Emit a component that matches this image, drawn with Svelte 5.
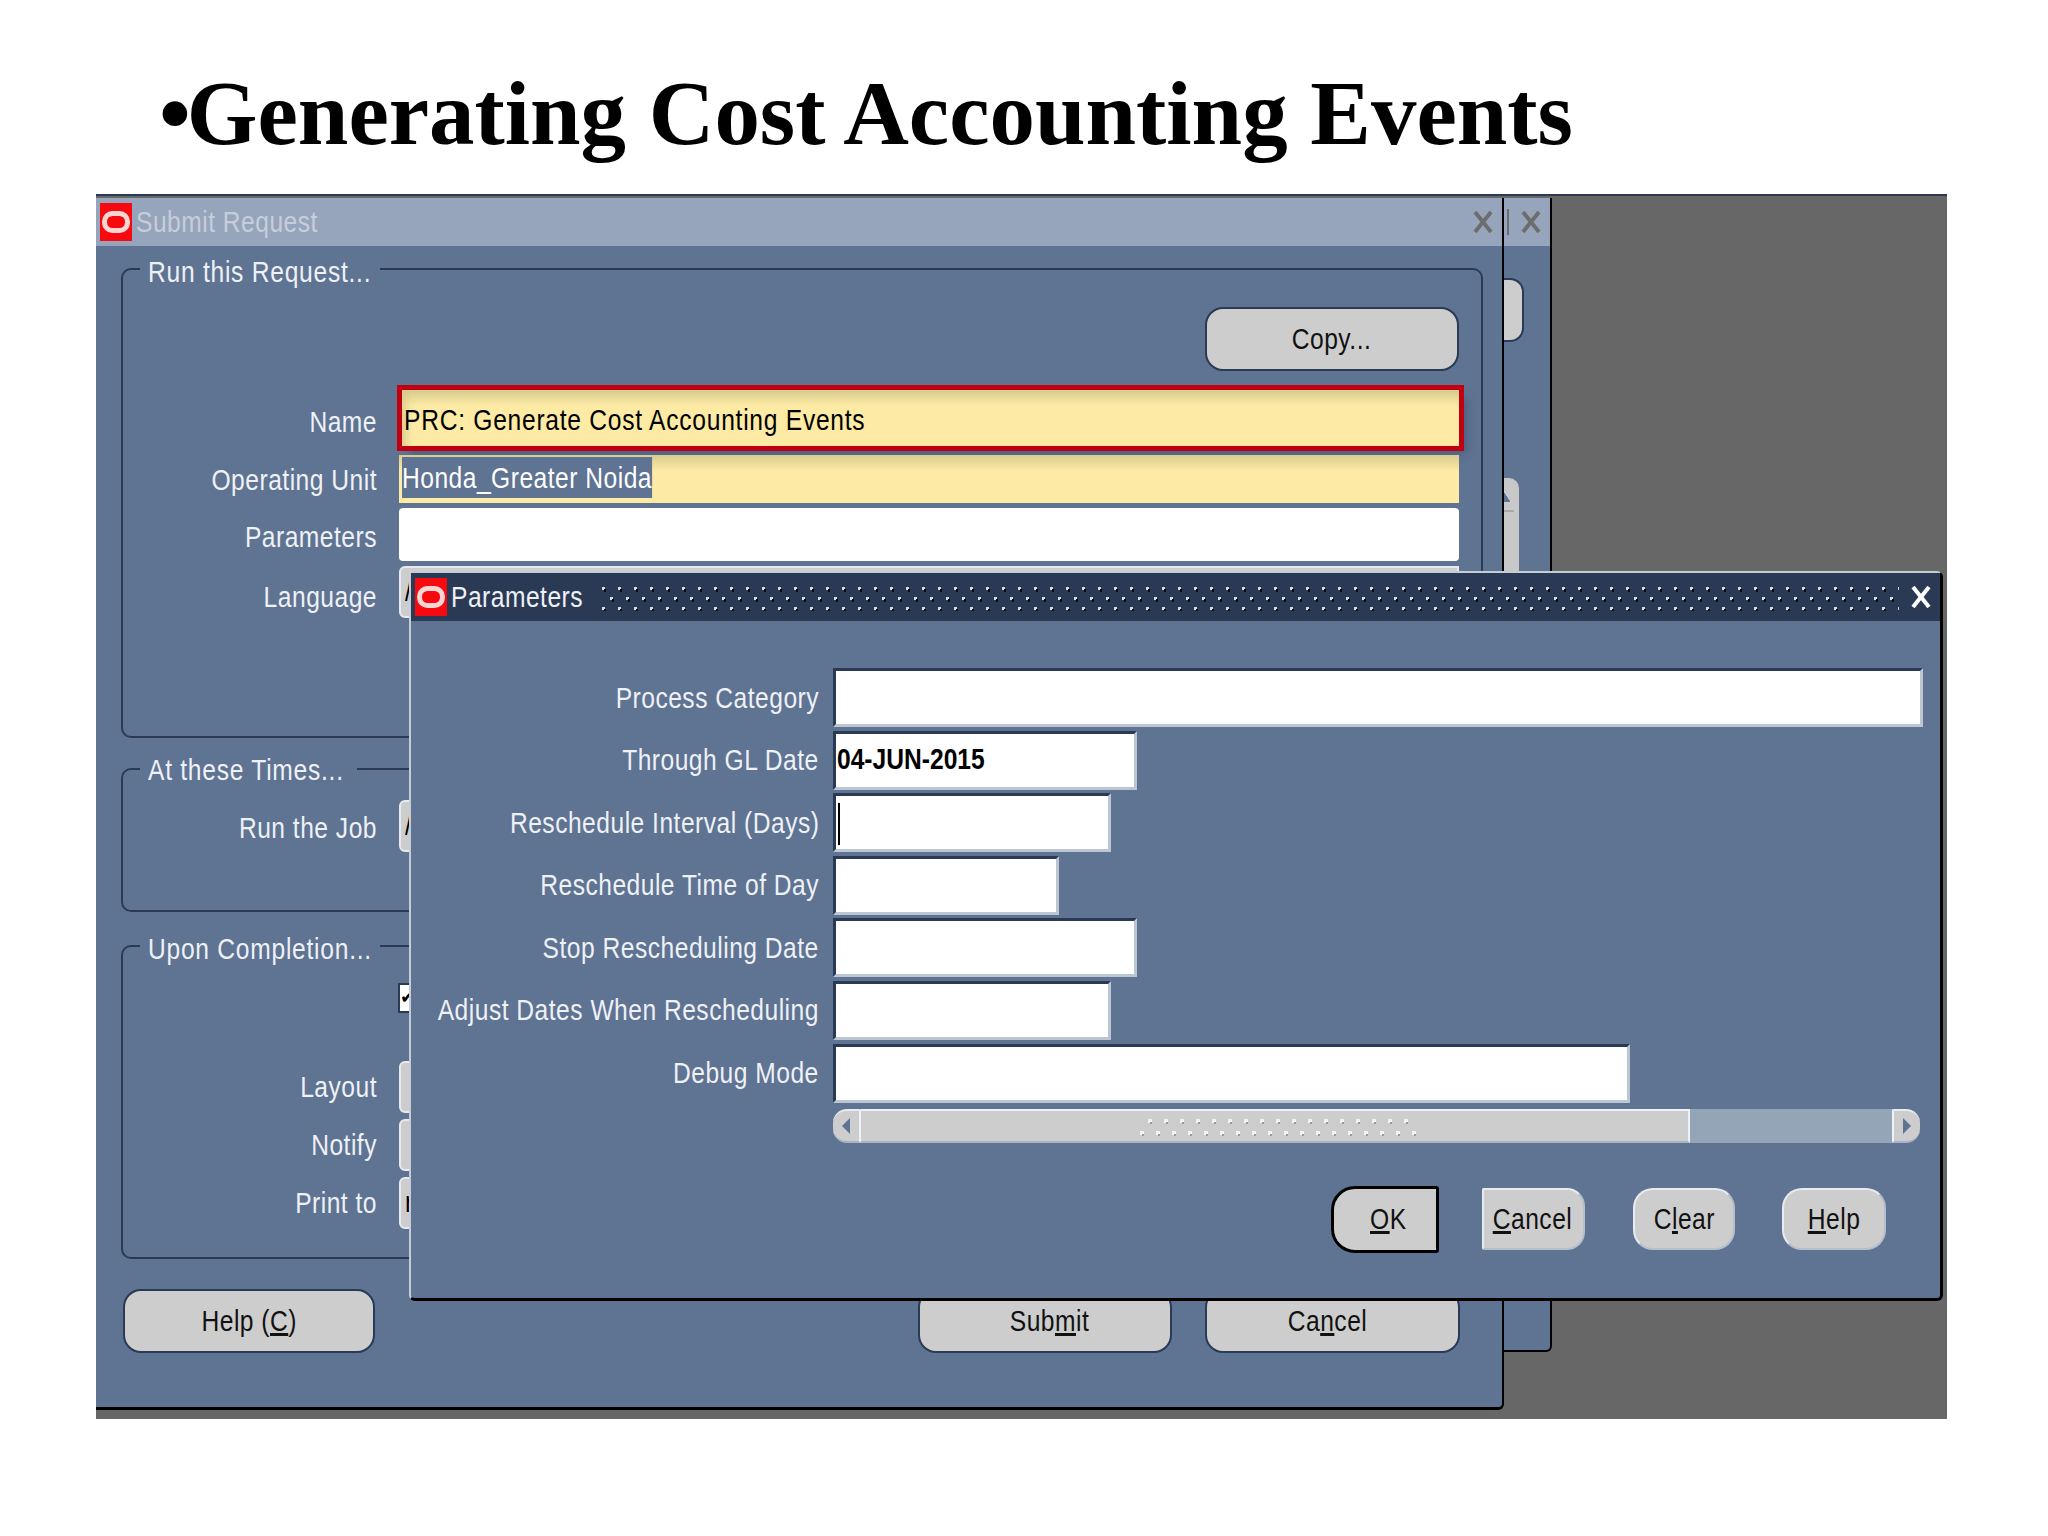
<script lang="ts">
  const paramRows = [
    { label: "Process Category", width: 1090, value: "" },
    { label: "Through GL Date", width: 304, value: "04-JUN-2015" },
    { label: "Reschedule Interval (Days)", width: 278, value: "", caret: true },
    { label: "Reschedule Time of Day", width: 226, value: "" },
    { label: "Stop Rescheduling Date", width: 304, value: "" },
    { label: "Adjust Dates When Rescheduling", width: 278, value: "" },
    { label: "Debug Mode", width: 797, value: "" },
  ];
</script>

{#snippet logo()}
  <svg class="logo" viewBox="0 0 32 38" aria-hidden="true">
    <rect width="32" height="38" fill="#f60a0f" />
    <rect x="4.5" y="10.5" width="23" height="17" rx="8" fill="#f60a0f" stroke="#fbd5d2" stroke-width="5" />
  </svg>
{/snippet}

{#snippet closeX(cls)}
  <svg class="close {cls}" viewBox="0 0 20 22" aria-hidden="true">
    <path d="M2 1 L18 21 M18 1 L2 21" fill="none" stroke="currentColor" stroke-width="4" />
  </svg>
{/snippet}

<div class="slide">
  <h1><span class="bullet">•</span>Generating Cost Accounting Events</h1>

  <div class="desktop">
    <!-- window behind the main one, only its right edge shows -->
    <div class="win back">
      <div class="titlebar inactive">
        <span class="spacer"></span>
        <span class="tick"></span>
        {@render closeX("x-grey")}
      </div>
      <div class="back-body">
        <div class="back-btn"></div>
        <div class="back-scroll"><span class="back-arrow"></span></div>
      </div>
    </div>

    <div class="win main">
      <div class="titlebar inactive">
        {@render logo()}
        <span class="title dim">Submit Request</span>
        <span class="spacer"></span>
        {@render closeX("x-grey")}
      </div>

      <div class="main-body">
        <fieldset class="group g1">
          <legend><span class="t">Run this Request...</span></legend>
          <div class="copy-row"><button class="btn copy"><span class="c">Copy...</span></button></div>
          <div class="row first">
            <span class="lbl">Name</span>
            <div class="field yellow focus"><span class="t">PRC: Generate Cost Accounting Events</span></div>
          </div>
          <div class="row ou">
            <span class="lbl">Operating Unit</span>
            <div class="field yellow"><span class="t sel">Honda_Greater Noida</span></div>
          </div>
          <div class="row pr">
            <span class="lbl">Parameters</span>
            <div class="field plain"></div>
          </div>
          <div class="row la">
            <span class="lbl">Language</span>
            <div class="field grey"><span class="t">/</span></div>
          </div>
        </fieldset>

        <fieldset class="group g2">
          <legend><span class="t">At these Times...</span></legend>
          <div class="row job">
            <span class="lbl">Run the Job</span>
            <div class="field grey"><span class="t">/</span></div>
          </div>
        </fieldset>

        <fieldset class="group g3">
          <legend><span class="t">Upon Completion...</span></legend>
          <div class="check"><span class="box">✔</span></div>
          <div class="row lay">
            <span class="lbl">Layout</span>
            <div class="field grey"></div>
          </div>
          <div class="row noti">
            <span class="lbl">Notify</span>
            <div class="field grey"></div>
          </div>
          <div class="row prn">
            <span class="lbl">Print to</span>
            <div class="field grey"><span class="t">r</span></div>
          </div>
        </fieldset>

        <div class="actions">
          <button class="btn help-c"><span class="c">Help (<u>C</u>)</span></button>
          <span class="spacer"></span>
          <button class="btn submit"><span class="c">Sub<u>m</u>it</span></button>
          <button class="btn cancel-main"><span class="c">Ca<u>n</u>cel</span></button>
        </div>
      </div>
    </div>

    <div class="win params">
      <div class="titlebar active">
        {@render logo()}
        <span class="title">Parameters</span>
        <svg class="grip" aria-hidden="true">
          <defs>
            <pattern id="gripdots" width="16" height="20" patternUnits="userSpaceOnUse">
              <rect x="0" y="0" width="3" height="3" fill="#d5dae3" />
              <rect x="2" y="2" width="2" height="3" fill="#05070b" />
              <rect x="8" y="10" width="3" height="3" fill="#d5dae3" />
              <rect x="10" y="12" width="2" height="3" fill="#05070b" />
            </pattern>
          </defs>
          <rect width="100%" height="100%" fill="url(#gripdots)" />
        </svg>
        {@render closeX("x-white")}
      </div>

      <div class="param-body">
        <div class="param-grid">
          {#each paramRows as row}
            <span class="plbl">{row.label}</span>
            <div class="pfield" style="width: {row.width}px">
              {#if row.value}<b class="t">{row.value}</b>{/if}
              {#if row.caret}<span class="caret"></span>{/if}
            </div>
          {/each}
        </div>

        <div class="hscroll">
          <div class="sb-end left"><span class="arrow-l"></span></div>
          <div class="thumb">
            <svg class="thumb-dots" aria-hidden="true">
              <defs>
                <pattern id="thumbdots" width="16" height="24" patternUnits="userSpaceOnUse">
                  <rect x="8" y="0" width="4" height="4" fill="#f4f4f4" />
                  <rect x="10" y="3" width="2" height="2" fill="#9a9a9a" />
                  <rect x="0" y="12" width="4" height="4" fill="#f4f4f4" />
                  <rect x="2" y="15" width="2" height="2" fill="#9a9a9a" />
                </pattern>
              </defs>
              <rect width="100%" height="100%" fill="url(#thumbdots)" />
            </svg>
          </div>
          <div class="track"></div>
          <div class="sb-end right"><span class="arrow-r"></span></div>
        </div>

        <div class="param-actions">
          <button class="btn ok"><span class="c"><u>O</u>K</span></button>
          <button class="btn soft cancel"><span class="c"><u>C</u>ancel</span></button>
          <button class="btn soft clear"><span class="c">C<u>l</u>ear</span></button>
          <button class="btn soft help"><span class="c"><u>H</u>elp</span></button>
        </div>
      </div>
    </div>
  </div>
</div>

<style>
  :global(body) {
    margin: 0;
    background: #fff;
  }
  .slide {
    width: 2048px;
    height: 1536px;
    overflow: hidden;
    background: #fff;
  }
  h1 {
    margin: 0;
    padding: 69px 0 0 159px;
    height: 194px;
    box-sizing: border-box;
    font: bold 90.9px/1 "Liberation Serif", serif;
    color: #000;
    white-space: nowrap;
  }
  .bullet {
    margin-right: -4px;
  }

  .desktop {
    position: relative;
    margin-left: 96px;
    width: 1851px;
    height: 1223px;
    background: #676767;
    border-top: 2px solid #2a3a55;
    font: 30px "Liberation Sans", sans-serif;
    letter-spacing: 0.6px;
  }
  /* the old Forms dialog font is tall and narrow, so everything gets squeezed */
  .t,
  .c,
  .lbl,
  .plbl,
  .title {
    display: inline-block;
    transform: scaleX(0.82);
    transform-origin: left center;
    white-space: nowrap;
  }
  .c {
    transform-origin: center;
  }
  .lbl,
  .plbl {
    transform-origin: right center;
  }

  .win {
    position: absolute;
    box-sizing: border-box;
    background: #5f7393;
    display: flex;
    flex-direction: column;
  }
  .back {
    left: 0;
    top: 2px;
    width: 1456px;
    height: 1154px;
    border-right: 2px solid #000;
    border-bottom: 2px solid #000;
    border-bottom-right-radius: 6px;
  }
  .main {
    left: 0;
    top: 2px;
    width: 1408px;
    height: 1212px;
    border-right: 2px solid #000;
    border-bottom: 3px solid #000;
    border-bottom-right-radius: 6px;
  }
  .params {
    left: 313px;
    top: 375px;
    width: 1534px;
    height: 730px;
    border-left: 2px solid #c5ccd6;
    border-top: 2px solid #c5ccd6;
    border-right: 3px solid #000;
    border-bottom: 3px solid #000;
    border-radius: 6px;
  }

  .titlebar {
    display: flex;
    align-items: center;
    height: 48px;
    flex: none;
    padding: 0 4px;
    box-sizing: border-box;
  }
  .inactive {
    background: #97a5bc;
  }
  .active {
    background: #2a3a55;
  }
  .spacer {
    flex: 1;
  }
  .logo {
    width: 32px;
    height: 38px;
    flex: none;
  }
  .title {
    margin-left: 4px;
    color: #eef1f5;
  }
  .title.dim {
    color: #c6cedb;
  }
  .close {
    flex: none;
    width: 20px;
    height: 22px;
  }
  .close:global(.x-grey) {
    color: #6d6d6d;
    margin-right: 5px;
  }
  .close:global(.x-white) {
    color: #fff;
    margin-right: 5px;
  }
  .tick {
    width: 2px;
    height: 26px;
    background: #6d6d6d;
    margin-right: 12px;
  }
  .grip {
    flex: 1;
    height: 24px;
    margin: 4px 12px 0 -10px;
    min-width: 0;
  }

  .back-body {
    padding-left: 1408px;
  }
  .back-btn {
    margin-top: 32px;
    width: 20px;
    height: 64px;
    box-sizing: border-box;
    background: #cdcdcd;
    border: 2px solid #2a3a55;
    border-left: 0;
    border-radius: 0 14px 14px 0;
  }
  .back-scroll {
    margin-top: 136px;
    width: 15px;
    height: 200px;
    box-sizing: border-box;
    padding-top: 12px;
    background: #c8c8c8;
    border-radius: 0 10px 0 0;
  }
  .back-arrow {
    display: block;
    width: 10px;
    height: 22px;
    box-sizing: border-box;
    border-bottom: 2px solid #a9a9a9;
    background: linear-gradient(to top right, #5f7393 0 40%, transparent 42%) 0 0 / 8px 12px no-repeat;
  }

  .main-body {
    padding: 6px 0 0 25px;
    display: flex;
    flex-direction: column;
  }
  .group {
    margin: 0;
    padding: 0;
    width: 1362px;
    box-sizing: border-box;
    border: 2px solid #2a3a55;
    border-radius: 10px;
    min-width: 0;
  }
  legend {
    margin-left: 17px;
    padding: 0 0 0 8px;
    height: 34px;
    line-height: 40px;
    letter-spacing: 0.9px;
    color: #eef1f5;
    box-sizing: border-box;
    width: 240px;
    white-space: nowrap;
  }
  .g2 legend {
    width: 217px;
    line-height: 36px;
  }
  .g1 {
    height: 486px;
  }
  .g2 {
    height: 160px;
    margin-top: 14px;
  }
  .g3 {
    height: 330px;
    margin-top: 17px;
  }
  .copy-row {
    display: flex;
    justify-content: flex-end;
    padding: 21px 22px 0 0;
  }
  .row {
    display: grid;
    grid-template-columns: 254px 1060px;
    column-gap: 22px;
    align-items: center;
    height: 52px;
  }
  .row.first {
    margin-top: 19px;
    height: 56px;
  }
  .row.ou {
    margin-top: 9px;
    height: 48px;
  }
  .row.pr {
    height: 53px;
    margin-top: 5px;
  }
  .row.la {
    height: 52px;
    margin-top: 5px;
  }
  .row.job {
    margin-top: 14px;
  }
  .first .lbl {
    padding-top: 8px;
  }
  .ou .lbl {
    padding-top: 2px;
  }
  .pr .lbl {
    padding-top: 5px;
  }
  .la .lbl {
    padding-top: 10px;
  }
  .job .lbl {
    padding-top: 4px;
  }
  .check {
    margin: 20px 0 0 275px;
  }
  .box {
    display: block;
    width: 22px;
    height: 26px;
    background: #fff;
    border: 2px solid #2a3a55;
    font: 18px/24px "DejaVu Sans", sans-serif;
    color: #000;
  }
  .row.lay {
    margin-top: 48px;
  }
  .row.noti,
  .row.prn {
    margin-top: 6px;
  }
  .lbl {
    text-align: right;
    color: #eef1f5;
  }
  .field {
    height: 100%;
    box-sizing: border-box;
    padding-left: 4px;
    line-height: 46px;
    color: #000;
    white-space: nowrap;
    overflow: hidden;
  }
  .plain {
    background: #fff;
    border-radius: 4px;
  }
  .yellow {
    background: linear-gradient(#d8cb8e 0, #fdeba5 16px);
  }
  .focus {
    margin-left: 3px;
    padding-left: 2px;
    letter-spacing: 0.9px;
    outline: 5px solid #c00010;
    box-shadow:
      8px 8px 8px rgba(42, 58, 85, 0.35),
      inset 10px 0 8px -6px #d8cb8e;
    line-height: 60px;
  }
  .sel {
    background: #5f7393;
    color: #fff;
    height: 41px;
    line-height: 42px;
    margin-left: -1px;
    padding: 0;
  }
  .grey {
    background: #cdcdcd;
    border: 2px solid #e6e9ee;
    border-radius: 6px 0 0 6px;
  }

  .btn {
    font: inherit;
    letter-spacing: inherit;
    color: #111;
    background: #cdcdcd;
    border: 2px solid #2a3a55;
    border-radius: 18px;
    padding: 0;
    box-sizing: border-box;
    white-space: nowrap;
  }
  .copy {
    width: 254px;
    height: 64px;
  }
  .actions {
    display: flex;
    margin-top: 30px;
    width: 1339px;
    box-sizing: border-box;
  }
  .help-c {
    margin-left: 2px;
    width: 252px;
    height: 64px;
  }
  .submit {
    width: 254px;
    height: 64px;
    margin-right: 33px;
    padding-left: 8px;
  }
  .cancel-main {
    width: 255px;
    height: 64px;
    padding-right: 10px;
  }

  .param-body {
    flex: 1;
    min-height: 0;
    padding: 47px 0 0 0;
    display: flex;
    flex-direction: column;
  }
  .param-grid {
    display: grid;
    grid-template-columns: 407px auto;
    justify-content: start;
    justify-items: start;
    align-items: center;
    column-gap: 14px;
    row-gap: 3.6px;
    padding-left: 1px;
  }
  .plbl {
    justify-self: end;
    color: #eef1f5;
  }
  .pfield {
    position: relative;
    height: 59px;
    box-sizing: border-box;
    background: #fff;
    border-top: 3px solid #2a3a55;
    border-left: 3px solid #2a3a55;
    border-right: 3px solid #bcc6d3;
    border-bottom: 3px solid #bcc6d3;
    padding-left: 1px;
    line-height: 50px;
    color: #000;
  }
  .pfield b {
    font-weight: bold;
    letter-spacing: 0;
  }
  .caret {
    position: absolute;
    left: 2px;
    top: 7px;
    width: 2px;
    height: 42px;
    background: #000;
  }

  .hscroll {
    display: flex;
    height: 34px;
    margin: 6px 0 0 422px;
    width: 1087px;
  }
  .sb-end {
    width: 28px;
    background: #cdcdcd;
    border-top: 2px solid #e8ebef;
    border-bottom: 2px solid #a8b3c3;
    display: flex;
    align-items: center;
    justify-content: center;
    box-sizing: border-box;
    flex: none;
  }
  .sb-end.left {
    border-radius: 14px 0 0 14px;
    border-right: 2px solid #eef1f5;
  }
  .sb-end.right {
    border-radius: 0 14px 14px 0;
    border-left: 2px solid #eef1f5;
  }
  .arrow-l {
    border: 8px solid transparent;
    border-left: 0;
    border-right: 8px solid #5f7393;
  }
  .arrow-r {
    border: 8px solid transparent;
    border-right: 0;
    border-left: 8px solid #5f7393;
  }
  .thumb {
    width: 829px;
    flex: none;
    background: #cdcdcd;
    border-top: 2px solid #eef1f5;
    border-bottom: 2px solid #a8b3c3;
    border-right: 2px solid #eef1f5;
    box-sizing: border-box;
    padding: 8px 0 0 279px;
  }
  .thumb-dots {
    display: block;
    width: 280px;
    height: 20px;
  }
  .track {
    flex: 1;
    background: #94a5b8;
  }

  .param-actions {
    display: flex;
    align-items: center;
    margin-top: 43px;
    padding-left: 920px;
  }
  .ok {
    width: 108px;
    height: 67px;
    padding-left: 7px;
    border: 3px solid #000;
    border-radius: 24px 3px 3px 24px;
  }
  .soft {
    height: 62px;
    width: 102px;
    border: 2px solid #e8ebef;
    border-bottom-color: #b5bfcc;
    border-right-color: #b5bfcc;
  }
  .cancel {
    margin-left: 43px;
    width: 103px;
    padding-right: 7px;
    border-radius: 2px 18px 18px 2px;
  }
  .clear {
    margin-left: 48px;
    border-radius: 20px;
  }
  .help {
    margin-left: 47px;
    width: 104px;
    border-radius: 20px;
  }
</style>
